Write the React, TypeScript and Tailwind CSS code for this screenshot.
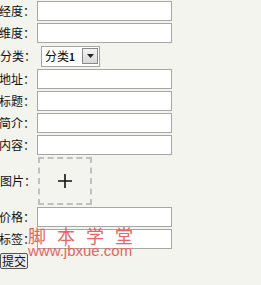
import React from 'react';

const font = { fontFamily: '"Noto Sans CJK SC", "Liberation Sans", sans-serif' };

function Field({ label }: { label: string }) {
  return (
    <div className="flex items-center h-[20px]">
      <span className="w-[38px] shrink-0 text-[12px] leading-none text-[#111] -ml-[1px]">{label}：</span>
      <input className="w-[135px] h-[20px] bg-white border border-[#a6a6a6] outline-none" />
    </div>
  );
}

export default function App() {
  return (
    <div className="relative w-[261px] h-[285px] bg-[#f4f4ef] overflow-hidden" style={font}>
      <form className="flex flex-col gap-[2px] pt-[1px]">
        <Field label="经度" />
        <Field label="维度" />
        <div className="flex items-center h-[22px]">
          <span className="w-[41px] shrink-0 text-[12px] leading-none text-[#111]">分类：</span>
          <div className="flex items-center w-[59px] h-[21px] bg-white border border-[#a6a6a6] pl-[3px] pr-[1px]">
            <span className="text-[12px] leading-none text-[#111]">
              分类<span className="text-[10px] font-bold">1</span>
            </span>
            <div className="ml-auto w-[16px] h-[16px] flex items-center justify-center border border-[#8a8a8a] bg-gradient-to-b from-[#f4f4f4] to-[#d8d8d8]">
              <svg width="7" height="4" viewBox="0 0 7 4">
                <path d="M0 0h7L3.5 4z" fill="#222" />
              </svg>
            </div>
          </div>
        </div>
        <Field label="地址" />
        <Field label="标题" />
        <Field label="简介" />
        <Field label="内容" />
        <div className="flex items-center h-[48px]">
          <span className="w-[38px] shrink-0 text-[12px] leading-none text-[#111]">图片：</span>
          <div className="w-[54px] h-[48px] border-2 border-dashed border-[#c0c0c0] flex items-center justify-center">
            <svg width="16" height="16" viewBox="0 0 16 16">
              <path d="M8 1v14M1 8h14" stroke="#111" strokeWidth="1.6" />
            </svg>
          </div>
        </div>
        <Field label="价格" />
        <Field label="标签" />
        <div className="flex pt-[2px]">
          <button
            type="button"
            className="h-[16px] w-[28px] flex items-center justify-center text-[12px] leading-none text-[#111] bg-[#ececec] border border-[#555] rounded-[2px]"
          >
            提交
          </button>
        </div>
      </form>

      <div className="absolute left-[28px] top-[226px] flex gap-[11px] text-[18px] leading-none text-[#e8645e]">
        <span>脚</span>
        <span>本</span>
        <span>学</span>
        <span>堂</span>
      </div>
      <div
        className="absolute left-[28px] top-[243px] text-[15px] leading-none text-[#e8645e]"
        style={{ fontFamily: '"Liberation Sans", sans-serif' }}
      >
        www.jbxue.com
      </div>
    </div>
  );
}
